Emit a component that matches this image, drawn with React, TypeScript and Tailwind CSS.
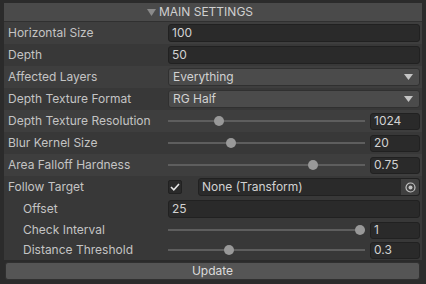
import React from 'react';

const font = { fontFamily: 'Inter, "Noto Sans", sans-serif' };

function Label({ text, indent }: { text: string; indent?: boolean }) {
  return (
    <div className={`w-[164px] shrink-0 text-[12px] text-[#c4c4c4] ${indent ? 'pl-[19px]' : 'pl-[4px]'}`}>
      {text}
    </div>
  );
}

function Row({ children, alt, h = 'h-[22px]' }: { children: React.ReactNode; alt?: boolean; h?: string }) {
  return (
    <div className={`flex items-center pr-[2px] ${h} ${alt ? 'bg-[#3e3e3e]' : 'bg-[#383838]'}`}>{children}</div>
  );
}

function TextField({ value }: { value: string }) {
  return (
    <div className="flex-1 h-[18px] flex items-center px-[3px] bg-[#2a2a2a] border border-[#212121] rounded-[3px] text-[12px] text-[#d2d2d2]">
      {value}
    </div>
  );
}

function Dropdown({ value }: { value: string }) {
  return (
    <div className="flex-1 h-[18px] flex items-center justify-between px-[4px] bg-[#4b4b4b] border border-[#303030] rounded-[3px] text-[12px] text-[#d2d2d2]">
      <span>{value}</span>
      <svg width="9" height="6" viewBox="0 0 9 6" className="mr-[2px]">
        <path d="M0 0 H9 L4.5 6 Z" fill="#c4c4c4" />
      </svg>
    </div>
  );
}

function Slider({ pos, value }: { pos: number; value: string }) {
  return (
    <div className="flex-1 flex items-center">
      <div className="relative w-[197px] h-[18px] flex items-center">
        <div className="w-full h-[2px] bg-[#5e5e5e]" />
        <div
          className="absolute w-[10px] h-[10px] rounded-full bg-[#999999] top-[4px]"
          style={{ left: pos - 5 }}
        />
      </div>
      <div className="ml-[5px] w-[50px] h-[17px] flex items-center px-[3px] bg-[#2a2a2a] border border-[#212121] rounded-[3px] text-[12px] text-[#d2d2d2]">
        {value}
      </div>
    </div>
  );
}

export default function App() {
  return (
    <div className="w-[426px] h-[284px] bg-[#2b2b2b] pt-[3px] px-[4px]" style={font}>
      <div className="h-[19px] flex items-center justify-center pr-[26px] bg-[#4a4a4a] text-[12px] text-[#d0d0d0] border-b border-[#303030]">
        <svg width="9" height="7" viewBox="0 0 9 7" className="mr-[3px]">
          <path d="M0 0 H9 L4.5 7 Z" fill="#8a8a8a" />
        </svg>
        MAIN SETTINGS
      </div>
      <div className="bg-[#383838]">
        <Row alt>
          <Label text="Horizontal Size" />
          <TextField value="100" />
        </Row>
        <Row>
          <Label text="Depth" />
          <TextField value="50" />
        </Row>
        <Row alt>
          <Label text="Affected Layers" />
          <Dropdown value="Everything" />
        </Row>
        <Row>
          <Label text="Depth Texture Format" />
          <Dropdown value="RG Half" />
        </Row>
        <Row alt>
          <Label text="Depth Texture Resolution" />
          <Slider pos={51} value="1024" />
        </Row>
        <Row>
          <Label text="Blur Kernel Size" />
          <Slider pos={63} value="20" />
        </Row>
        <Row alt>
          <Label text="Area Falloff Hardness" />
          <Slider pos={145} value="0.75" />
        </Row>
        <Row>
          <Label text="Follow Target" />
          <div className="flex-1 flex items-center">
            <div className="w-[14px] h-[14px] flex items-center justify-center bg-[#2a2a2a] border border-[#212121] rounded-[2px]">
              <svg width="10" height="8" viewBox="0 0 10 8">
                <path d="M1 4 L3.8 6.8 L9 1" stroke="#e6e6e6" strokeWidth="1.6" fill="none" />
              </svg>
            </div>
            <div className="ml-[16px] flex-1 h-[18px] flex items-center justify-between pl-[3px] bg-[#2a2a2a] border border-[#212121] rounded-[3px] text-[12px] text-[#d2d2d2]">
              <span>None (Transform)</span>
              <div className="w-[18px] h-full flex items-center justify-center bg-[#404040] rounded-r-[3px]">
                <svg width="11" height="11" viewBox="0 0 11 11">
                  <circle cx="5.5" cy="5.5" r="4.5" stroke="#c4c4c4" strokeWidth="1.2" fill="none" />
                  <circle cx="5.5" cy="5.5" r="2" fill="#c4c4c4" />
                </svg>
              </div>
            </div>
          </div>
        </Row>
        <Row>
          <Label text="Offset" indent />
          <TextField value="25" />
        </Row>
        <Row h="h-[20px]">
          <Label text="Check Interval" indent />
          <Slider pos={192} value="1" />
        </Row>
        <Row h="h-[20px]">
          <Label text="Distance Threshold" indent />
          <Slider pos={61} value="0.3" />
        </Row>
      </div>
      <div className="mt-[2px] h-[18px] mr-[2px] ml-[1px] flex items-center justify-center bg-[#555555] border border-[#303030] rounded-[3px] text-[12px] text-[#dcdcdc]">
        Update
      </div>
    </div>
  );
}
